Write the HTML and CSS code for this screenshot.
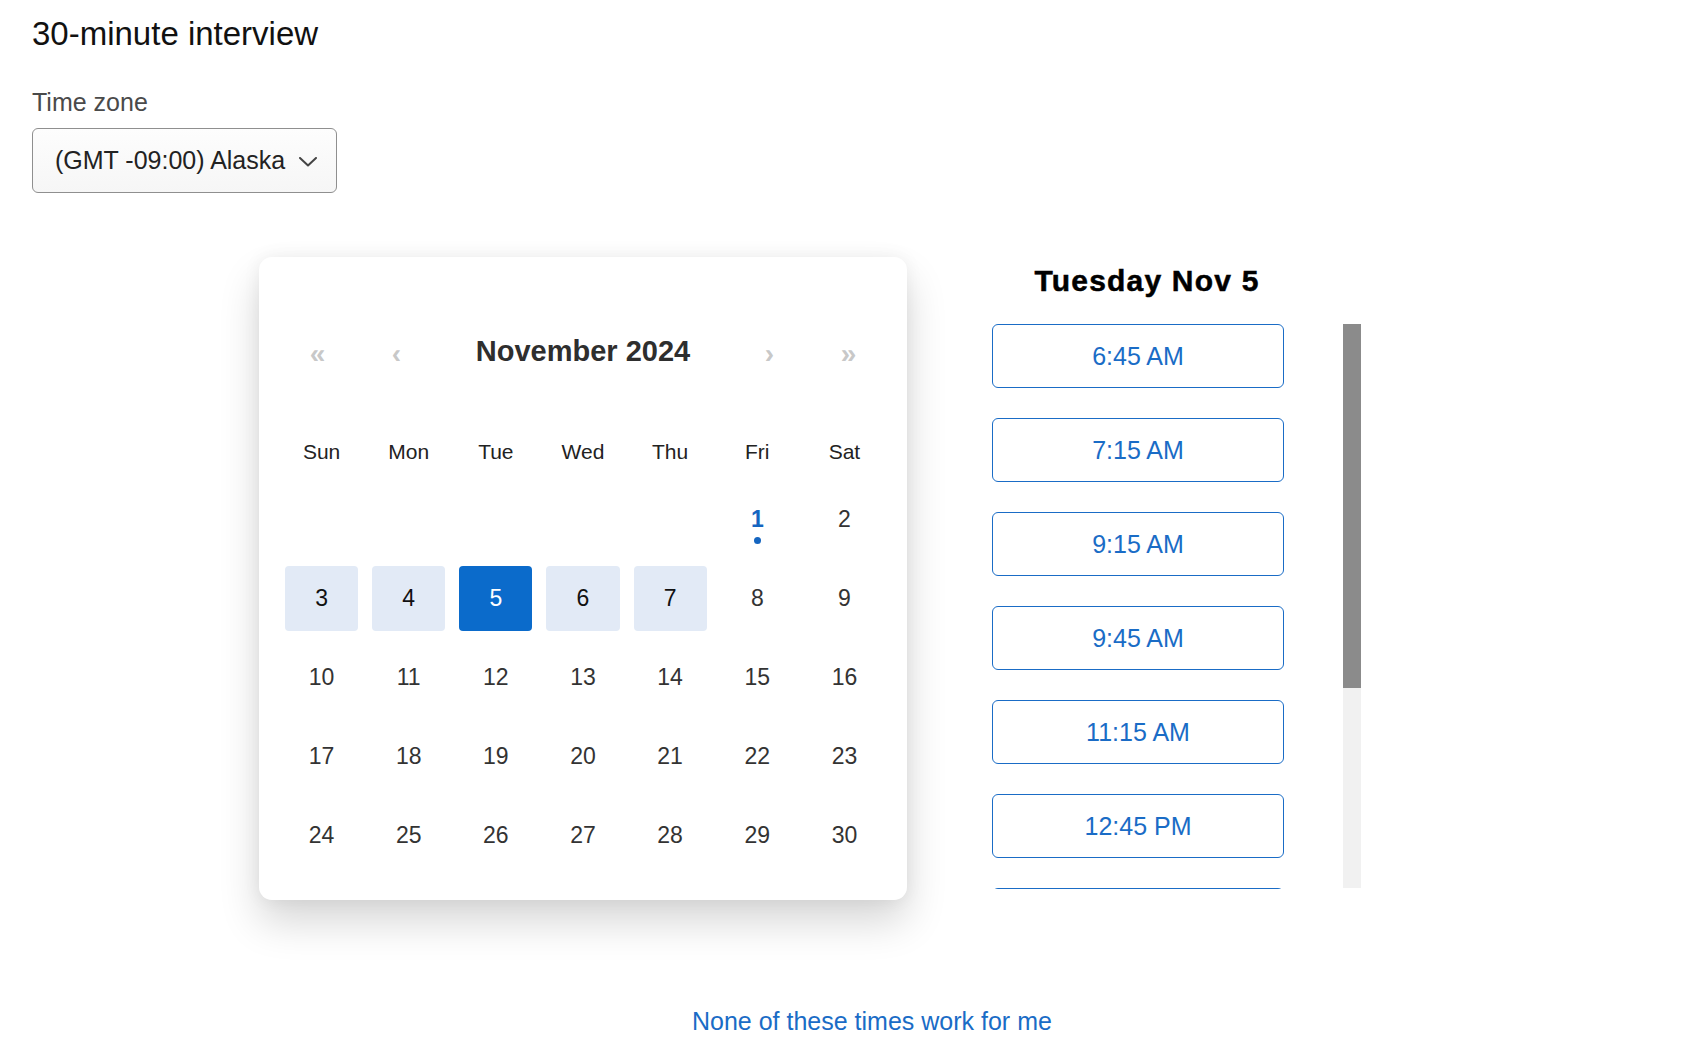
FILE: index.html
```html
<!DOCTYPE html>
<html lang="en">
<head>
<meta charset="utf-8">
<title>30-minute interview</title>
<link rel="stylesheet" href="styles.css">
</head>
<body>
<div class="page">
  <h1 class="title">30-minute interview</h1>
  <div class="tz-label">Time zone</div>
  <div class="tz-select">
    <span class="tz-value">(GMT -09:00) Alaska</span>
    <svg class="chev" width="18" height="10" viewBox="0 0 18 10"><path d="M1 1 L9 8.5 L17 1" fill="none" stroke="#444" stroke-width="2" stroke-linecap="round" stroke-linejoin="round"/></svg>
  </div>

  <div class="main">
    <div class="card">
      <div class="nav">
        <span class="nav-btn">«</span>
        <span class="nav-btn">‹</span>
        <span class="month">November 2024</span>
        <span class="nav-btn">›</span>
        <span class="nav-btn">»</span>
      </div>
      <div class="dow">
        <span>Sun</span><span>Mon</span><span>Tue</span><span>Wed</span><span>Thu</span><span>Fri</span><span>Sat</span>
      </div>
      <div class="days">
        <span class="day empty"></span>
        <span class="day empty"></span>
        <span class="day empty"></span>
        <span class="day empty"></span>
        <span class="day empty"></span>
        <span class="day today">1<i class="dot"></i></span>
        <span class="day">2</span>
        <span class="day range">3</span>
        <span class="day range">4</span>
        <span class="day selected">5</span>
        <span class="day range">6</span>
        <span class="day range">7</span>
        <span class="day">8</span>
        <span class="day">9</span>
        <span class="day">10</span>
        <span class="day">11</span>
        <span class="day">12</span>
        <span class="day">13</span>
        <span class="day">14</span>
        <span class="day">15</span>
        <span class="day">16</span>
        <span class="day">17</span>
        <span class="day">18</span>
        <span class="day">19</span>
        <span class="day">20</span>
        <span class="day">21</span>
        <span class="day">22</span>
        <span class="day">23</span>
        <span class="day">24</span>
        <span class="day">25</span>
        <span class="day">26</span>
        <span class="day">27</span>
        <span class="day">28</span>
        <span class="day">29</span>
        <span class="day">30</span>
      </div>
    </div>

    <div class="slots-col">
      <h2 class="slots-title">Tuesday Nov 5</h2>
      <div class="slots-wrap">
        <div class="slots">
          <button class="slot">6:45 AM</button>
          <button class="slot">7:15 AM</button>
          <button class="slot">9:15 AM</button>
          <button class="slot">9:45 AM</button>
          <button class="slot">11:15 AM</button>
          <button class="slot">12:45 PM</button>
          <button class="slot" aria-label="more times"></button>
        </div>
        <div class="scrollbar"><div class="thumb"></div></div>
      </div>
    </div>
  </div>

  <div class="footer">
    <a class="none-link" href="#">None of these times work for me</a>
  </div>
</div>
</body>
</html>
```

FILE: styles.css
```css
* { box-sizing: border-box; }

html, body {
  margin: 0;
  padding: 0;
  background: #fff;
}

body {
  font-family: "Liberation Sans", Arial, Helvetica, sans-serif;
  color: #222;
}

.page {
  padding: 15px 0 0 32px;
}

.title {
  margin: 0;
  font-size: 33px;
  line-height: 37px;
  font-weight: normal;
  color: #111;
}

.tz-label {
  margin-top: 36px;
  font-size: 25px;
  line-height: 28px;
  color: #4a4a4a;
}

.tz-select {
  margin-top: 12px;
  width: 305px;
  height: 65px;
  border: 1px solid #8f8f8f;
  border-radius: 6px;
  background: linear-gradient(#fdfdfd, #f6f6f6);
  display: flex;
  align-items: center;
  justify-content: space-between;
  padding: 0 19px 0 22px;
}

.tz-value {
  font-size: 25px;
  color: #222;
}

.chev { display: block; margin-top: 2px; }

.main {
  margin-top: 64px;
  padding-left: 227px;
  display: flex;
  align-items: flex-start;
  gap: 85px;
}

.card {
  width: 648px;
  height: 643px;
  background: #fff;
  border-radius: 13px;
  padding: 64px 19px 32px;
  box-shadow: 0 22px 40px rgba(0, 0, 0, 0.16), 0 0 18px rgba(0, 0, 0, 0.06);
}

.nav {
  height: 60px;
  display: grid;
  grid-template-columns: 79px 79px 1fr 79px 79px;
  align-items: center;
  text-align: center;
}

.nav-btn {
  font-size: 28px;
  font-weight: bold;
  color: #c8c8c8;
  line-height: 1;
  margin-top: 5px;
}

.month {
  font-size: 29px;
  font-weight: bold;
  color: #2e2e2e;
}

.dow {
  margin-top: 51px;
  height: 40px;
  display: grid;
  grid-template-columns: repeat(7, 1fr);
  align-items: center;
  text-align: center;
  font-size: 21px;
  color: #222;
}

.days {
  margin-top: 15px;
  display: grid;
  grid-template-columns: repeat(7, 1fr);
  grid-auto-rows: 65px;
  row-gap: 14px;
}

.day {
  position: relative;
  margin: 0 7px;
  display: flex;
  align-items: center;
  justify-content: center;
  font-size: 23px;
  color: #333;
  border-radius: 4px;
}

.day.range {
  background: #e2eaf6;
  color: #111;
}

.day.selected {
  background: #0b6bcb;
  color: #fff;
}

.day.today {
  color: #1565c0;
  font-weight: bold;
}

.dot {
  position: absolute;
  left: 50%;
  top: 50%;
  width: 7px;
  height: 7px;
  margin: 17px 0 0 -3px;
  border-radius: 50%;
  background: #1565c0;
}

.slots-col {
  width: 369px;
}

.slots-title {
  margin: 6px 0 0 0;
  width: 310px;
  text-align: center;
  font-size: 30px;
  line-height: 36px;
  font-weight: bold;
  letter-spacing: 1.2px;
  -webkit-text-stroke: 0.5px #000;
  color: #000;
}

.slots-wrap {
  margin-top: 25px;
  display: flex;
  align-items: flex-start;
  gap: 59px;
}

.slots {
  width: 292px;
  height: 565px;
  overflow: hidden;
  display: flex;
  flex-direction: column;
}

.scrollbar {
  width: 18px;
  height: 564px;
  background: #f1f1f1;
}

.thumb {
  height: 364px;
  background: #8b8b8b;
}

.slot {
  flex: 0 0 auto;
  width: 292px;
  height: 64px;
  margin: 0 0 30px 0;
  border: 1px solid #1a6cc6;
  border-radius: 6px;
  background: #fff;
  font-family: "Liberation Sans", Arial, Helvetica, sans-serif;
  font-size: 25px;
  color: #1a6cc6;
  cursor: pointer;
  padding: 0;
}

.footer {
  margin-top: 106px;
  padding-left: 660px;
}

.none-link {
  font-size: 25px;
  line-height: 30px;
  color: #1a6cc6;
  text-decoration: none;
}
```
